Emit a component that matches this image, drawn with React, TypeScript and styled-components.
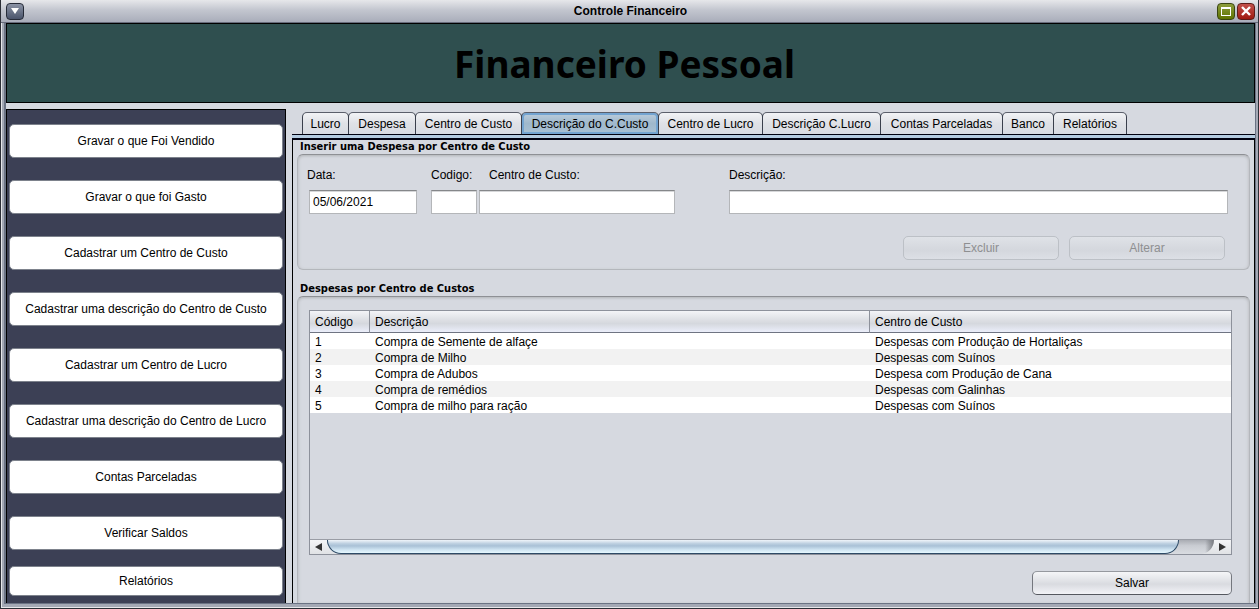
import React, { useState } from "react";
import styled, { createGlobalStyle } from "styled-components";

const GlobalStyle = createGlobalStyle`
  *, *::before, *::after { box-sizing: border-box; }
  html { background: #d6d9e0; }
  body {
    margin: 0;
    color: #000;
    font: 12px/16px "Liberation Sans", Arial, sans-serif;
  }
  button, input { font: inherit; color: inherit; }
  h1, h2 { margin: 0; }
`;

const Frame = styled.div`
  min-height: 100vh;
  display: flex;
  flex-direction: column;
  border: solid #2b2e36;
  border-width: 0 1px 1px;
  background: #a4a9b5;
  box-shadow: inset 1px -1px 0 #e6e7ea;
`;

const TitleBar = styled.header`
  height: 23px;
  display: grid;
  grid-template-columns: 1fr auto 1fr;
  align-items: center;
  padding: 0 3px 0 5px;
  background: linear-gradient(#e6e7ea, #c3c6cf 45%, #a9adba);
  border-bottom: 1px solid #686c7c;
`;

const WindowTitle = styled.span`
  font-weight: bold;
`;

const WindowControls = styled.div`
  display: flex;
  justify-content: flex-end;
  gap: 2px;
`;

const WindowButton = styled.button<{ $from: string; $to: string; $edge: string }>`
  width: 18px;
  height: 17px;
  padding: 0;
  display: grid;
  place-items: center;
  border: 1px solid ${(p) => p.$edge};
  border-radius: 4px;
  background: linear-gradient(${(p) => p.$from}, ${(p) => p.$to});
`;

const Body = styled.div`
  flex: 1;
  display: flex;
  flex-direction: column;
  gap: 6px;
  margin: 0 2px 4px 3px;
  border: solid #6b7384;
  border-width: 0 1px 1px 2px;
  background: #d6d9e0;
`;

const Banner = styled.div`
  height: 80px;
  display: grid;
  place-items: center;
  padding: 2px 12px 0 0;
  border: 1px solid #000;
  background: #2f4f4f;
`;

const BannerTitle = styled.h1`
  font: bold 37px/44px "Noto Sans", Tahoma, sans-serif;
`;

const Columns = styled.div`
  flex: 1;
  display: flex;
  gap: 6px;
`;

const Sidebar = styled.nav`
  width: 280px;
  display: flex;
  flex-direction: column;
  gap: 22px;
  padding: 14px 2px 6px;
  border: solid #000;
  border-width: 1px 1px 0;
  background: #3c4055;
`;

const MenuButton = styled.button<{ $short?: boolean }>`
  height: ${(p) => (p.$short ? 30 : 34)}px;
  margin-top: ${(p) => (p.$short ? -6 : 0)}px;
  padding: 0;
  border: 1px solid #7d828c;
  border-radius: 5px;
  background: #fff;
`;

const Main = styled.main`
  flex: 1;
  min-width: 0;
  display: flex;
  flex-direction: column;
  padding-top: 3px;
`;

const Tabs = styled.div`
  display: flex;
  padding-left: 10px;
`;

const Tab = styled.button<{ $active: boolean; $width: number }>`
  width: ${(p) => p.$width}px;
  height: 22px;
  padding: 0;
  white-space: nowrap;
  border: 1px solid #3a3f4c;
  border-top-color: #5b5f6b;
  border-bottom: 0;
  border-radius: 5px 5px 0 0;
  margin-right: -1px;
  background: ${(p) =>
    p.$active ? "linear-gradient(#bccddc, #9fb8cc 50%, #a9c1d4)" : "linear-gradient(#f2f3f6, #dfe1e6 50%, #d8dbe2)"};
  box-shadow: ${(p) => (p.$active ? "inset 0 0 0 2px #73a4d1" : "none")};
`;

const TabRule = styled.div`
  height: 6px;
  border: solid #00000f;
  border-width: 1px 0 2px;
  background: #b4cbe0;
`;

const Panel = styled.div`
  flex: 1;
  display: flex;
  flex-direction: column;
  padding: 0 4px;
  border: solid #000;
  border-width: 0 1px;
`;

const GroupTitle = styled.h2`
  padding: 0 3px;
  font: bold 11px/14px "DejaVu Sans Condensed", Tahoma, sans-serif;
`;

const Group = styled.section<{ $open?: boolean }>`
  display: flex;
  flex-direction: column;
  flex: ${(p) => (p.$open ? "1" : "none")};
  border: 1px solid #b4b7bc;
  border-top-color: #8e9095;
  border-bottom-width: ${(p) => (p.$open ? 0 : 1)}px;
  border-radius: ${(p) => (p.$open ? "6px 6px 0 0" : "6px")};
  box-shadow: inset 0 2px 3px -1px #b4b6ba, inset 2px 0 3px -1px #c6c8cc, inset -2px 0 3px -1px #c6c8cc;
`;

const EntryForm = styled(Group).attrs({ as: "form" })`
  margin-bottom: 12px;
  padding: 12px 21px 9px 11px;
  gap: 22px;
`;

const Fields = styled.div`
  display: grid;
  grid-template-columns: 122px 48px 250px 1fr;
`;

const Field = styled.div<{ $gap?: number; $label?: number }>`
  display: flex;
  flex-direction: column;
  gap: 7px;
  padding-right: ${(p) => p.$gap || 0}px;
  label { margin-left: ${(p) => p.$label || 0}px; white-space: nowrap; }
`;

const TextBox = styled.input`
  width: 100%;
  height: 24px;
  padding: 0 3px;
  border: 1px solid #b4b6b9;
  border-top: 1px solid #85878a;
  border-radius: 0;
  background: #fff;
  box-shadow: inset 0 1px 0 #d6d7d9;
  outline: 0;
`;

const Actions = styled.div<{ $inset?: number }>`
  display: flex;
  justify-content: flex-end;
  gap: 10px;
  padding-right: ${(p) => p.$inset || 0}px;
`;

const PushButton = styled.button<{ $width: number }>`
  width: ${(p) => p.$width}px;
  height: 24px;
  padding: 0;
  border: 1px solid #74777e;
  border-top-color: #96999f;
  border-bottom-color: #55585f;
  border-radius: 5px;
  background: linear-gradient(#f5f6f8, #d9dbe0 55%, #f2f3f7);
  &:disabled {
    color: #8e8f91;
    border-color: #bcc0c6;
    background: linear-gradient(#dfe2e7, #d4d7dd 60%, #dcdfe5);
  }
`;

const ListGroup = styled(Group)`
  padding: 13px 17px 8px 11px;
  gap: 16px;
`;

const TablePane = styled.div`
  flex: 1;
  display: flex;
  flex-direction: column;
  justify-content: space-between;
  border: 1px solid #8d919b;
`;

const Table = styled.table`
  width: 100%;
  table-layout: fixed;
  border-collapse: separate;
  border-spacing: 0;
  th {
    height: 22px;
    padding: 0 5px;
    text-align: left;
    font-weight: normal;
    border-right: 1px solid #8d919b;
    border-bottom: 1px solid #6f7482;
    background: linear-gradient(#f3f4f7, #dcdee3 45%, #d5d8de 60%, #ebeefa);
  }
  th:last-child { border-right: 0; }
  td { height: 16px; padding: 2px 5px 0; line-height: 14px; }
  tbody tr { background: #fff; }
  tbody tr:nth-child(even) { background: #f2f2f2; }
`;

const Column = styled.col<{ $width?: number }>`
  width: ${(p) => (p.$width ? `${p.$width}px` : "auto")};
`;

const ScrollBar = styled.div`
  height: 15px;
  display: flex;
  border-top: 1px solid #9a9da5;
  background: linear-gradient(#f4f5f7, #e0e2e5);
`;

const ScrollButton = styled.button`
  width: 17px;
  padding: 0;
  display: grid;
  place-items: center;
  border: 0;
  background: none;
`;

const ScrollTrack = styled.div`
  flex: 1;
  border-radius: 0 0 14px 14px;
  background: linear-gradient(90deg, transparent 99%, #777a80), linear-gradient(#a9acb3, #c9ccd2 40%, #d9dce1);
`;

const ScrollThumb = styled.div`
  width: 96%;
  height: 14px;
  border: solid #2d4a66;
  border-width: 0 1px 1px;
  border-radius: 0 0 14px 14px;
  background: linear-gradient(#f0f5fa, #bccfe0 28%, #a9c1d6 45%, #cfe4f2 75%, #e6f8ff);
`;

const menu = [
  "Gravar o que Foi Vendido",
  "Gravar o que foi Gasto",
  "Cadastrar um Centro de Custo",
  "Cadastrar uma descrição do Centro de Custo",
  "Cadastrar um Centro de Lucro",
  "Cadastrar uma descrição do Centro de Lucro",
  "Contas Parceladas",
  "Verificar Saldos",
  "Relatórios",
];

const tabs = [
  { name: "Lucro", width: 47 },
  { name: "Despesa", width: 68 },
  { name: "Centro de Custo", width: 107 },
  { name: "Descrição do C.Custo", width: 138 },
  { name: "Centro de Lucro", width: 105 },
  { name: "Descrição C.Lucro", width: 119 },
  { name: "Contas Parceladas", width: 123 },
  { name: "Banco", width: 52 },
  { name: "Relatórios", width: 74 },
];

const rows = [
  ["1", "Compra de Semente de alfaçe", "Despesas com Produção de Hortaliças"],
  ["2", "Compra de Milho", "Despesas com Suínos"],
  ["3", "Compra de Adubos", "Despesa com Produção de Cana"],
  ["4", "Compra de remédios", "Despesas com Galinhas"],
  ["5", "Compra de milho para ração", "Despesas com Suínos"],
];

export default function App() {
  const [active, setActive] = useState(3);
  return (
    <>
      <GlobalStyle />
      <Frame>
        <TitleBar>
          <WindowButton aria-label="Menu da janela" $from="#8b93a5" $to="#4a546b" $edge="#262b38">
            <svg width="8" height="6" viewBox="0 0 8 6"><path d="M0 0h8L4 6z" fill="#fff" /></svg>
          </WindowButton>
          <WindowTitle>Controle Financeiro</WindowTitle>
          <WindowControls>
            <WindowButton aria-label="Maximizar" $from="#8d9d3d" $to="#5f7400" $edge="#3a4512">
              <svg width="10" height="9" viewBox="0 0 10 9" shapeRendering="crispEdges"><path d="M0 0h10v9H0zM1 2v6h8V2z" fill="#fff" fillRule="evenodd" /></svg>
            </WindowButton>
            <WindowButton aria-label="Fechar" $from="#c2514c" $to="#a01a10" $edge="#5e1d1a">
              <svg width="10" height="10" viewBox="0 0 10 10"><path d="M1 1l8 8M9 1l-8 8" stroke="#fff" strokeWidth="2.4" /></svg>
            </WindowButton>
          </WindowControls>
        </TitleBar>
        <Body>
          <Banner><BannerTitle>Financeiro Pessoal</BannerTitle></Banner>
          <Columns>
            <Sidebar>
              {menu.map((m, i) => (
                <MenuButton key={m} $short={i === menu.length - 1}>{m}</MenuButton>
              ))}
            </Sidebar>
            <Main>
              <Tabs role="tablist">
                {tabs.map((t, i) => (
                  <Tab
                    key={t.name}
                    role="tab"
                    aria-selected={i === active}
                    $active={i === active}
                    $width={t.width}
                    onClick={() => setActive(i)}
                  >
                    {t.name}
                  </Tab>
                ))}
              </Tabs>
              <TabRule />
              <Panel>
                <GroupTitle>Inserir uma Despesa por Centro de Custo</GroupTitle>
                <EntryForm>
                  <Fields>
                    <Field $gap={14} $label={-2}><label htmlFor="data">Data:</label><TextBox id="data" defaultValue="05/06/2021" /></Field>
                    <Field $gap={2}><label htmlFor="codigo">Codigo:</label><TextBox id="codigo" /></Field>
                    <Field $gap={54} $label={10}><label htmlFor="centro">Centro de Custo:</label><TextBox id="centro" /></Field>
                    <Field><label htmlFor="descricao">Descrição:</label><TextBox id="descricao" /></Field>
                  </Fields>
                  <Actions $inset={3}>
                    <PushButton type="button" $width={156} disabled>Excluir</PushButton>
                    <PushButton type="button" $width={156} disabled>Alterar</PushButton>
                  </Actions>
                </EntryForm>
                <GroupTitle>Despesas por Centro de Custos</GroupTitle>
                <ListGroup $open>
                  <TablePane>
                    <Table>
                      <colgroup><Column $width={60} /><Column $width={500} /><Column /></colgroup>
                      <thead><tr><th>Código</th><th>Descrição</th><th>Centro de Custo</th></tr></thead>
                      <tbody>
                        {rows.map((r) => (
                          <tr key={r[0]}>{r.map((c, i) => <td key={i}>{c}</td>)}</tr>
                        ))}
                      </tbody>
                    </Table>
                    <ScrollBar>
                      <ScrollButton aria-label="Rolar para a esquerda">
                        <svg width="7" height="8" viewBox="0 0 7 8"><path d="M7 0v8L0 4z" fill="#333" /></svg>
                      </ScrollButton>
                      <ScrollTrack><ScrollThumb /></ScrollTrack>
                      <ScrollButton aria-label="Rolar para a direita">
                        <svg width="7" height="8" viewBox="0 0 7 8"><path d="M0 0v8l7-4z" fill="#333" /></svg>
                      </ScrollButton>
                    </ScrollBar>
                  </TablePane>
                  <Actions><PushButton type="button" $width={200}>Salvar</PushButton></Actions>
                </ListGroup>
              </Panel>
            </Main>
          </Columns>
        </Body>
      </Frame>
    </>
  );
}
